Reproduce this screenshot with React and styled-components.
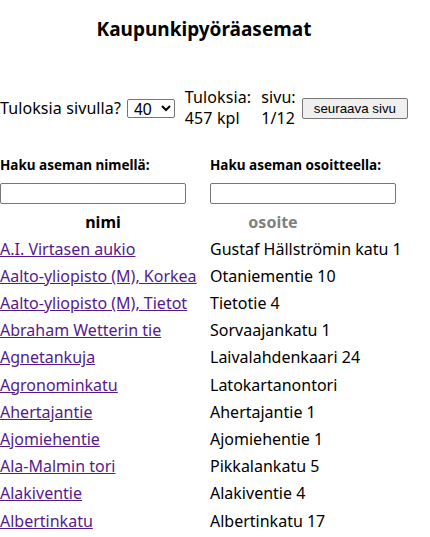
import styled, { createGlobalStyle } from 'styled-components';

const stations = [
    { name: 'A.I. Virtasen aukio', address: 'Gustaf Hällströmin katu 1' },
    { name: 'Aalto-yliopisto (M), Korkea', address: 'Otaniementie 10' },
    { name: 'Aalto-yliopisto (M), Tietot', address: 'Tietotie 4' },
    { name: 'Abraham Wetterin tie', address: 'Sorvaajankatu 1' },
    { name: 'Agnetankuja', address: 'Laivalahdenkaari 24' },
    { name: 'Agronominkatu', address: 'Latokartanontori' },
    { name: 'Ahertajantie', address: 'Ahertajantie 1' },
    { name: 'Ajomiehentie', address: 'Ajomiehentie 1' },
    { name: 'Ala-Malmin tori', address: 'Pikkalankatu 5' },
    { name: 'Alakiventie', address: 'Alakiventie 4' },
    { name: 'Albertinkatu', address: 'Albertinkatu 17' },
];

export default function App(){
    return(
        <>
        <GlobalStyle/>
        <Page>
            <Title>Kaupunkipyöräasemat</Title>
            <Controls>
                <span>Tuloksia sivulla?</span>
                <PageSize defaultValue="40">
                    <option value="10">10</option>
                    <option value="20">20</option>
                    <option value="40">40</option>
                </PageSize>
                <Stat>Tuloksia:<br/>457 kpl</Stat>
                <Stat>sivu:<br/>1/12</Stat>
                <NextButton>seuraava sivu</NextButton>
            </Controls>
            <StationTable>
                <SearchField>
                    <label>Haku aseman nimellä:</label>
                    <input type="text"/>
                </SearchField>
                <SearchField>
                    <label>Haku aseman osoitteella:</label>
                    <input type="text"/>
                </SearchField>
                <HeaderCell>nimi</HeaderCell>
                <HeaderCell $muted $width="126px">osoite</HeaderCell>
                {stations.map((s) => (
                    <Row key={s.name}>
                        <Cell><StationLink href="#">{s.name}</StationLink></Cell>
                        <Cell>{s.address}</Cell>
                    </Row>
                ))}
            </StationTable>
        </Page>
        </>
    );
}

const GlobalStyle = createGlobalStyle`
    body{
        margin: 0;
        background: #ffffff;
        color: #000000;
        font-family: 'Noto Sans', 'Open Sans', sans-serif;
        font-size: 16px;
    }
`;

const Page = styled.div`
    width: 408px;
`;

const Title = styled.h3`
    margin: 16px 0 0 0;
    text-align: center;
    font-size: 19px;
    line-height: 26px;
    font-weight: 700;
`;

const Controls = styled.div`
    display: flex;
    align-items: center;
    margin-top: 45px;
    line-height: 21px;
    white-space: nowrap;
    letter-spacing: 0.1px;
`;

const PageSize = styled.select`
    margin-left: 6px;
    width: 49px;
    height: 19px;
    padding: 0 0 0 2px;
    font-family: 'Liberation Sans', Arial, sans-serif;
    font-size: 16px;
    letter-spacing: 0;
    border: 1px solid #767676;
    border-radius: 2px;
    background: #ffffff;
    color: #000000;
`;

const Stat = styled.span`
    margin-left: 10px;
`;

const NextButton = styled.button`
    margin-left: 6px;
    height: 21px;
    padding: 1px 11px;
    font-family: 'Liberation Sans', Arial, sans-serif;
    font-size: 13.33px;
    letter-spacing: 0;
    color: #000000;
    background: #efefef;
    border: 1px solid #767676;
    border-radius: 2px;
`;

const StationTable = styled.div`
    display: grid;
    grid-template-columns: 206px 1fr;
    column-gap: 4px;
    margin-top: 27px;
`;

const SearchField = styled.div`
    display: flex;
    flex-direction: column;
    label{
        font-size: 13.5px;
        font-weight: 700;
        line-height: 18px;
        white-space: nowrap;
    }
    input{
        box-sizing: border-box;
        margin-top: 9px;
        width: 186px;
        height: 21px;
        padding: 1px 2px;
        border: 1px solid #767676;
        border-radius: 2px;
    }
`;

const HeaderCell = styled.div`
    width: ${p => p.$width || 'auto'};
    margin-top: 4.5px;
    height: 27.2px;
    line-height: 27.2px;
    text-align: center;
    font-weight: 700;
    color: ${p => p.$muted ? '#808080' : '#000000'};
`;

const Row = styled.div`
    display: contents;
`;

const Cell = styled.div`
    height: 27.2px;
    line-height: 27.2px;
    white-space: nowrap;
`;

const StationLink = styled.a`
    color: #551A8B;
    text-decoration: underline;
`;
